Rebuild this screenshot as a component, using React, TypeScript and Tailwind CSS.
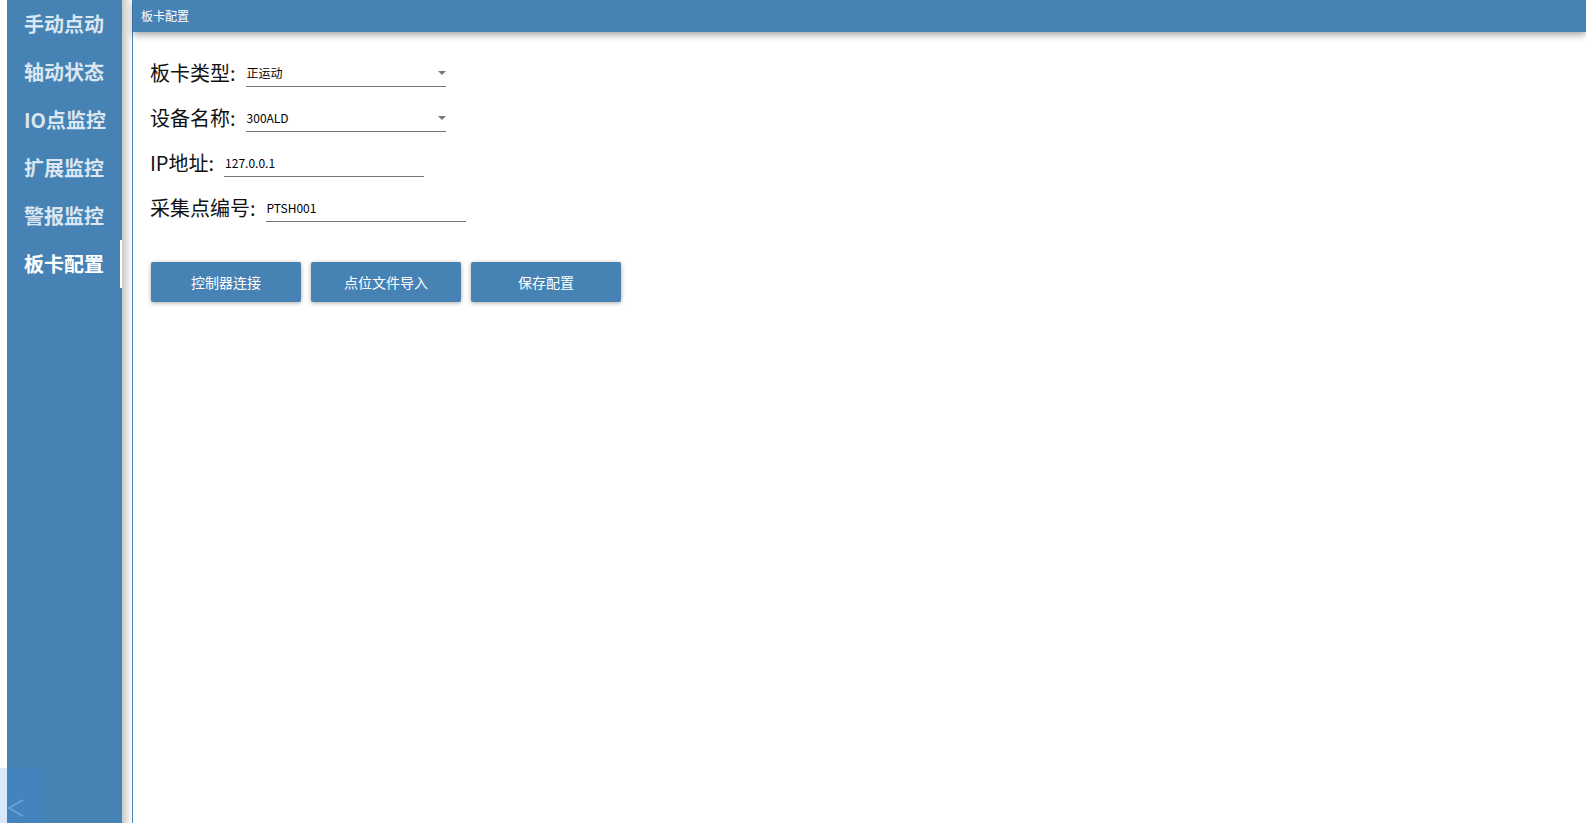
const menu = ["手动点动", "轴动状态", "IO点监控", "扩展监控", "警报监控", "板卡配置"];

const fields = [
  { label: "板卡类型:", value: "正运动", select: true },
  { label: "设备名称:", value: "300ALD", select: true },
  { label: "IP地址:", value: "127.0.0.1", select: false },
  { label: "采集点编号:", value: "PTSH001", select: false },
];

const buttons = ["控制器连接", "点位文件导入", "保存配置"];

export default function App() {
  return (
    <div className="relative flex h-[823px] w-full overflow-hidden bg-white font-['Noto_Sans_CJK_SC',sans-serif]">
      <div className="w-[7px] shrink-0 bg-white" />

      <aside className="relative w-[115px] shrink-0 bg-[#4682b4]">
        {menu.map((item, i) => {
          const active = i === menu.length - 1;
          return (
            <div
              key={item}
              className={`relative flex h-[48px] items-center pl-[17px] text-[20px] font-bold ${
                active ? "text-white" : "text-[#dbe6f0]"
              }`}
            >
              {item}
              {active && <span className="absolute right-0 top-0 h-[48px] w-[2px] bg-white" />}
            </div>
          );
        })}
      </aside>

      <div className="w-[10px] shrink-0 bg-gradient-to-r from-[#c8c8c8] to-white" />

      <main className="flex min-w-0 flex-1 flex-col border-l border-[#4682b4]">
        <header className="flex h-[32px] shrink-0 items-center bg-[#4682b4] pl-[8px] text-[12px] text-white shadow-[0_3px_7px_rgba(0,0,0,0.35)]">
          板卡配置
        </header>

        <div className="flex flex-col gap-[13px] pl-[17px] pt-[25px]">
          {fields.map((f) => (
            <div key={f.label} className="flex h-[32px] items-center gap-[10px]">
              <span className="text-[20px] leading-none text-[#111]">{f.label}</span>
              <div className="relative mt-[3px] flex h-[24px] w-[200px] items-center border-b border-[#777] pb-[2px] pl-[1px] text-[12px] text-black">
                {f.value}
                {f.select && (
                  <span className="absolute right-0 top-[8px] h-0 w-0 border-x-[4px] border-t-[4px] border-x-transparent border-t-[#777]" />
                )}
              </div>
            </div>
          ))}
        </div>

        <div className="mt-[38px] flex gap-[10px] pl-[18px]">
          {buttons.map((b) => (
            <button
              key={b}
              className="h-[40px] w-[150px] shrink-0 rounded-[2px] bg-[#4682b4] text-[14px] text-white shadow-[0_1px_4px_rgba(0,0,0,0.35)]"
            >
              {b}
            </button>
          ))}
        </div>
      </main>

      <div className="absolute bottom-0 left-0 h-[55px] w-[43px] bg-[#3a8ee6]/20 pl-[7px] pt-[31px]">
        <svg width="17" height="18" viewBox="0 0 17 18" fill="none">
          <polyline points="16,1 1.5,9 16,17" stroke="#6ea4d8" strokeWidth="1.5" />
        </svg>
      </div>
    </div>
  );
}
